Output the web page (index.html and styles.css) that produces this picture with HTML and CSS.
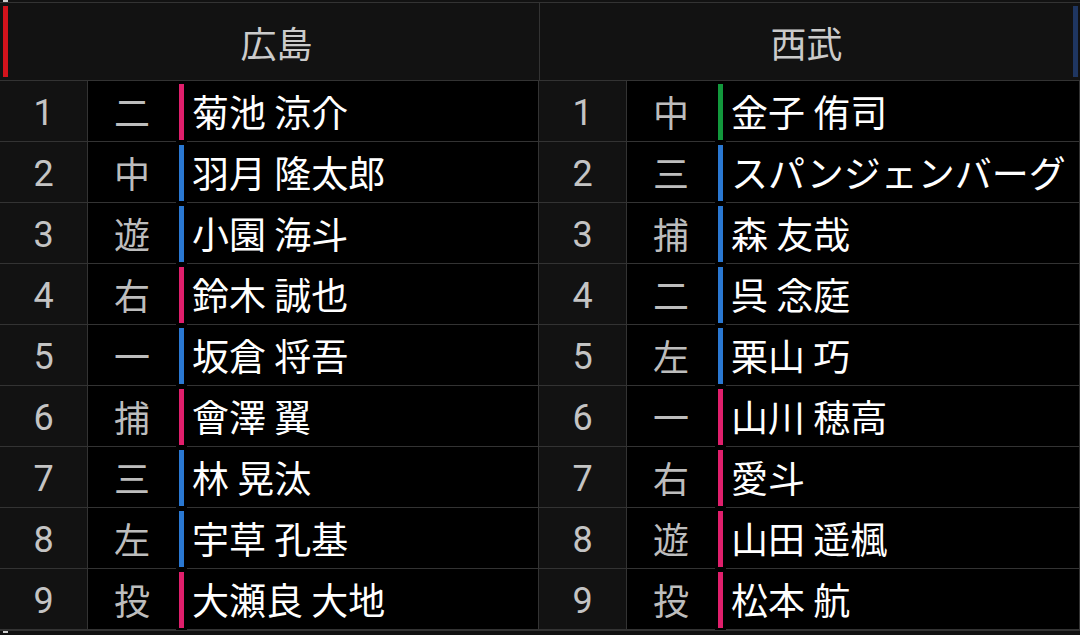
FILE: index.html
```html
<!DOCTYPE html>
<html lang="ja">
<head>
<meta charset="utf-8">
<title>スタメン</title>
<link rel="stylesheet" href="styles.css">
</head>
<body>
<div class="page">
  <div class="strip strip-top"><span class="nub"></span></div>
  <div class="board">
    <div class="head">
      <div class="team team-l"><span class="flag flag-red"></span><span class="tname tname-l">広島</span></div>
      <div class="team team-r"><span class="tname tname-r">西武</span><span class="flag flag-navy"></span></div>
    </div>
    <div class="body">
      <div class="side side-l">
        <div class="row"><div class="num">1</div><div class="pos">二</div><div class="barwrap"><span class="bar pink"></span></div><div class="name">菊池 涼介</div></div>
        <div class="row"><div class="num">2</div><div class="pos">中</div><div class="barwrap"><span class="bar blue"></span></div><div class="name">羽月 隆太郎</div></div>
        <div class="row"><div class="num">3</div><div class="pos">遊</div><div class="barwrap"><span class="bar blue"></span></div><div class="name">小園 海斗</div></div>
        <div class="row"><div class="num">4</div><div class="pos">右</div><div class="barwrap"><span class="bar pink"></span></div><div class="name">鈴木 誠也</div></div>
        <div class="row"><div class="num">5</div><div class="pos">一</div><div class="barwrap"><span class="bar blue"></span></div><div class="name">坂倉 将吾</div></div>
        <div class="row"><div class="num">6</div><div class="pos">捕</div><div class="barwrap"><span class="bar pink"></span></div><div class="name">會澤 翼</div></div>
        <div class="row"><div class="num">7</div><div class="pos">三</div><div class="barwrap"><span class="bar blue"></span></div><div class="name">林 晃汰</div></div>
        <div class="row"><div class="num">8</div><div class="pos">左</div><div class="barwrap"><span class="bar blue"></span></div><div class="name">宇草 孔基</div></div>
        <div class="row"><div class="num">9</div><div class="pos">投</div><div class="barwrap"><span class="bar pink"></span></div><div class="name">大瀬良 大地</div></div>
      </div>
      <div class="side side-r">
        <div class="row"><div class="num">1</div><div class="pos">中</div><div class="barwrap"><span class="bar green"></span></div><div class="name">金子 侑司</div></div>
        <div class="row"><div class="num">2</div><div class="pos">三</div><div class="barwrap"><span class="bar blue"></span></div><div class="name">スパンジェンバーグ</div></div>
        <div class="row"><div class="num">3</div><div class="pos">捕</div><div class="barwrap"><span class="bar blue"></span></div><div class="name">森 友哉</div></div>
        <div class="row"><div class="num">4</div><div class="pos">二</div><div class="barwrap"><span class="bar blue"></span></div><div class="name">呉 念庭</div></div>
        <div class="row"><div class="num">5</div><div class="pos">左</div><div class="barwrap"><span class="bar blue"></span></div><div class="name">栗山 巧</div></div>
        <div class="row"><div class="num">6</div><div class="pos">一</div><div class="barwrap"><span class="bar pink"></span></div><div class="name">山川 穂高</div></div>
        <div class="row"><div class="num">7</div><div class="pos">右</div><div class="barwrap"><span class="bar pink"></span></div><div class="name">愛斗</div></div>
        <div class="row"><div class="num">8</div><div class="pos">遊</div><div class="barwrap"><span class="bar pink"></span></div><div class="name">山田 遥楓</div></div>
        <div class="row"><div class="num">9</div><div class="pos">投</div><div class="barwrap"><span class="bar pink"></span></div><div class="name">松本 航</div></div>
      </div>
    </div>
  </div>
  <div class="strip strip-bot"><span class="nub"></span></div>
</div>
</body>
</html>
```

FILE: styles.css
```css
* { box-sizing: border-box; }
html, body {
  margin: 0;
  padding: 0;
  background: #121212;
  width: 1080px;
  height: 635px;
  overflow: hidden;
}
body {
  font-family: "Noto Sans CJK JP", "Noto Sans", sans-serif;
}
.page {
  display: flex;
  flex-direction: column;
  width: 1080px;
  height: 635px;
}
.strip {
  display: flex;
  padding-left: 3px;
  background: #121212;
}
.strip-top { height: 2px; }
.strip-bot { height: 4px; }
.nub {
  width: 5px;
  height: 2px;
  background: #cfcfcf;
}
.board {
  border-top: 1px solid #333;
  border-bottom: 1px solid #333;
  display: flex;
  flex-direction: column;
}
.head {
  display: flex;
  height: 78px;
  background: #121212;
  border-bottom: 1px solid #333;
}
.team {
  display: flex;
  align-items: stretch;
  padding: 3px;
}
.team-l {
  width: 540px;
  border-right: 1px solid #333;
  padding-right: 0;
}
.team-r {
  flex: 1;
  padding-left: 0;
  padding-right: 2px;
}
.flag {
  width: 5px;
  flex: none;
}
.flag-red { background: #d3131c; }
.flag-navy { background: #1f3661; }
.tname {
  flex: 1;
  display: flex;
  align-items: center;
  justify-content: center;
  color: #cbcbcb;
  font-size: 36px;
  line-height: 1;
}
.tname-l { padding-left: 6px; }
.tname-r { padding-left: 0; }
.body {
  display: flex;
}
.side {
  display: flex;
  flex-direction: column;
  border-right: 1px solid #333;
}
.side-l { width: 539px; }
.side-r { flex: 1; }
.row {
  display: grid;
  grid-template-columns: 88px 88px 11px 1fr;
  height: 61px;
}
.num, .pos, .name {
  border-bottom: 1px solid #333;
  display: flex;
  align-items: center;
  line-height: 1;
}
.num {
  background: #121212;
  border-right: 1px solid #333;
  justify-content: center;
  color: #c4c4c4;
  font-family: Roboto, "Noto Sans", sans-serif;
  font-size: 36px;
  padding-top: 3px;
}
.pos {
  background: #000;
  justify-content: center;
  color: #bdbdbd;
  font-size: 36px;
}
.barwrap {
  background: #000;
  border-bottom: 1px solid #000;
  padding: 3px 3px 1px;
  display: flex;
}
.bar {
  width: 5px;
  flex: none;
}
.pink { background: #e01f6c; }
.blue { background: #2a78d2; }
.green { background: #12983c; }
.name {
  background: #000;
  color: #fff;
  font-size: 37px;
  padding-left: 5px;
  white-space: nowrap;
  overflow: hidden;
}
```
